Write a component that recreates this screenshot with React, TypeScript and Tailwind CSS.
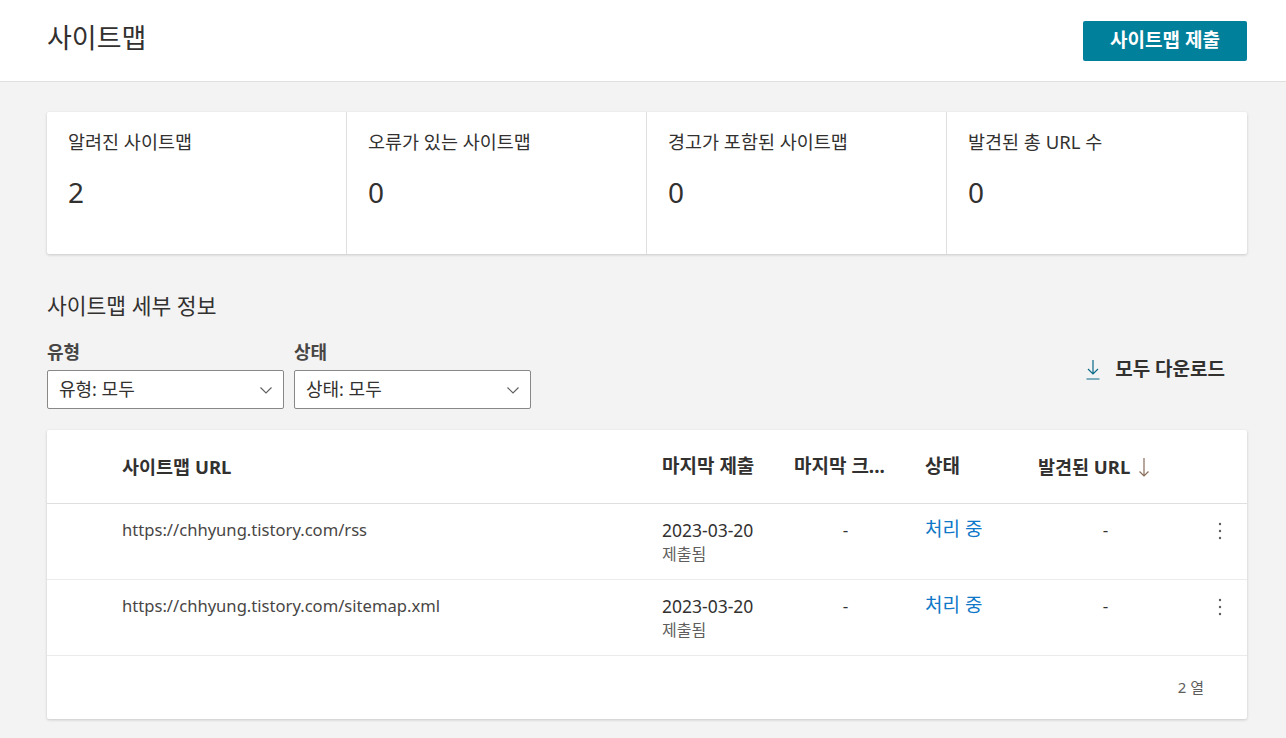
import React from 'react';

const font = { fontFamily: '"Segoe UI", "Noto Sans", "Noto Sans CJK KR", sans-serif' };

interface SitemapRow {
  url: string;
  submitted: string;
  lastRead: string;
  status: string;
  found: string;
}

const stats = [
  { label: '알려진 사이트맵', value: '2' },
  { label: '오류가 있는 사이트맵', value: '0' },
  { label: '경고가 포함된 사이트맵', value: '0' },
  { label: '발견된 총 URL 수', value: '0' },
];

const rows: SitemapRow[] = [
  { url: 'https://chhyung.tistory.com/rss', submitted: '2023-03-20', lastRead: '-', status: '처리 중', found: '-' },
  { url: 'https://chhyung.tistory.com/sitemap.xml', submitted: '2023-03-20', lastRead: '-', status: '처리 중', found: '-' },
];

function Chevron() {
  return (
    <svg width="16" height="16" viewBox="0 0 16 16" fill="none" stroke="#605e5c" strokeWidth="1.1">
      <path d="M2.5 5.5 8 11l5.5-5.5" />
    </svg>
  );
}

function Select({ text }: { text: string }) {
  return (
    <div className="flex h-[39px] w-[237px] items-center justify-between rounded-[2px] border border-[#8a8886] bg-white pl-[11px] pr-[9px] text-[18px] text-[#323130]">
      <span>{text}</span>
      <Chevron />
    </div>
  );
}

function Kebab() {
  return (
    <svg width="4" height="18" viewBox="0 0 4 18" fill="#605e5c">
      <circle cx="2" cy="2" r="1.2" />
      <circle cx="2" cy="9" r="1.2" />
      <circle cx="2" cy="16" r="1.2" />
    </svg>
  );
}

export default function App() {
  return (
    <div className="min-h-[738px] w-full bg-[#f3f3f3] text-[#323130]" style={font}>
      <header className="flex h-[82px] items-center justify-between border-b border-[#e1dfdd] bg-white pl-[47px] pr-[39px]">
        <h1 className="-mt-[4px] text-[27px] font-normal">사이트맵</h1>
        <button className="h-[40px] w-[164px] rounded-[2px] bg-[#00809b] text-[19px] font-bold text-white">
          사이트맵 제출
        </button>
      </header>

      <main className="pl-[47px] pr-[39px] pt-[30px]">
        <div className="grid grid-cols-4 rounded-[2px] bg-white shadow-[0_1px_3px_rgba(0,0,0,0.18)]">
          {stats.map((s, i) => (
            <div
              key={s.label}
              className={`h-[142px] pl-[21px] pt-[18px] ${i < 3 ? 'border-r border-[#e1dfdd]' : ''}`}
            >
              <div className="text-[18.5px] leading-[24px]">{s.label}</div>
              <div className="mt-[21px] text-[28px] leading-[34px]">{s.value}</div>
            </div>
          ))}
        </div>

        <h2 className="mt-[38px] text-[21.5px] leading-[28px] font-normal">사이트맵 세부 정보</h2>

        <div className="mt-[21px] flex items-end">
          <div>
            <div className="text-[18px] leading-[22px] font-bold text-[#484644]">유형</div>
            <div className="mt-[7px]">
              <Select text="유형: 모두" />
            </div>
          </div>
          <div className="ml-[10px]">
            <div className="text-[18px] leading-[22px] font-bold text-[#484644]">상태</div>
            <div className="mt-[7px]">
              <Select text="상태: 모두" />
            </div>
          </div>
          <div className="mb-[26px] ml-auto mr-[22px] flex items-center gap-[15px] text-[19px] font-bold">
            <svg width="14" height="22" viewBox="0 0 14 22" fill="none" stroke="#0b6a8a" strokeWidth="1.2">
              <path d="M7 2v14M2 11l5 5 5-5M0.5 21h13" />
            </svg>
            <span>모두 다운로드</span>
          </div>
        </div>

        <div className="mt-[21px] rounded-[2px] bg-white shadow-[0_1px_3px_rgba(0,0,0,0.18)]">
          <div className="flex h-[74px] items-center border-b border-[#e1dfdd] text-[18.5px] font-bold">
            <div className="w-[615px] pl-[75px]">사이트맵 URL</div>
            <div className="w-[132px] text-[19px]">마지막 제출</div>
            <div className="w-[131px] text-[19px]">마지막 크...</div>
            <div className="w-[113px] text-[19px]">상태</div>
            <div className="flex items-center gap-[8px]">
              발견된 URL
              <svg width="12" height="22" viewBox="0 0 12 22" fill="none" stroke="#8a6d5c" strokeWidth="1.2">
                <path d="M6 2v18M1.5 15.5 6 20l4.5-4.5" />
              </svg>
            </div>
          </div>
          {rows.map((r) => (
            <div key={r.url} className="flex h-[76px] border-b border-[#edebe9] pt-[13px]">
              <div className="w-[615px] pl-[75px] text-[16.6px] leading-[26px] text-[#484644]">{r.url}</div>
              <div className="w-[132px]">
                <div className="text-[17.5px] leading-[26px]">{r.submitted}</div>
                <div className="text-[16px] leading-[22px] text-[#605e5c]">제출됨</div>
              </div>
              <div className="w-[131px] pr-[28px] text-center text-[17px] leading-[26px]">{r.lastRead}</div>
              <div className="w-[113px] text-[19px] leading-[24px] text-[#0f78c8]">{r.status}</div>
              <div className="w-[135px] text-center text-[17px] leading-[26px]">{r.found}</div>
              <div className="ml-auto mr-[25px] pt-[5px]">
                <Kebab />
              </div>
            </div>
          ))}
          <div className="flex h-[63px] items-center justify-end pr-[43px] text-[15px] text-[#605e5c]">2 열</div>
        </div>
      </main>
    </div>
  );
}
